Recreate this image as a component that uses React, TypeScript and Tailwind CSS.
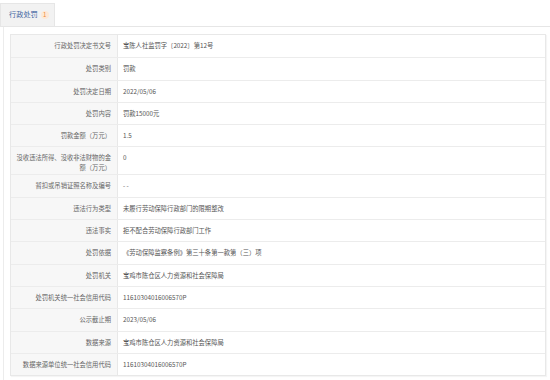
import React from 'react';

const rows: { label: string; value: string; tall?: boolean }[] = [
  { label: '行政处罚决定书文号', value: '宝陈人社监罚字〔2022〕第12号' },
  { label: '处罚类别', value: '罚款' },
  { label: '处罚决定日期', value: '2022/05/06' },
  { label: '处罚内容', value: '罚款15000元' },
  { label: '罚款金额（万元）', value: '1.5' },
  { label: '没收违法所得、没收非法财物的金额（万元）', value: '0', tall: true },
  { label: '暂扣或吊销证照名称及编号', value: '- -' },
  { label: '违法行为类型', value: '未履行劳动保障行政部门的限期整改' },
  { label: '违法事实', value: '拒不配合劳动保障行政部门工作' },
  { label: '处罚依据', value: '《劳动保障监察条例》第三十条第一款第（三）项' },
  { label: '处罚机关', value: '宝鸡市陈仓区人力资源和社会保障局' },
  { label: '处罚机关统一社会信用代码', value: '11610304016006570P' },
  { label: '公示截止期', value: '2023/05/06' },
  { label: '数据来源', value: '宝鸡市陈仓区人力资源和社会保障局' },
  { label: '数据来源单位统一社会信用代码', value: '11610304016006570P' },
];

export default function App() {
  return (
    <div
      className="w-[550px] h-[380px] bg-white overflow-hidden flex flex-col pt-[3px]"
      style={{ fontFamily: '"Noto Sans CJK SC", "Noto Sans", sans-serif' }}
    >
      {/* Tab header */}
      <div className="flex border-b border-[#e6e6e6]">
        <div className="h-[23px] w-[55px] bg-[#f2f2f2] border border-b-0 border-[#e6e6e6] flex items-center pl-[8px] gap-[3px]">
          <span className="text-[7.2px] leading-none text-[#3d64a0]">行政处罚</span>
          <span className="text-[6px] leading-none text-[#f08a3c] bg-[#fde9d6] rounded-full w-[8px] h-[8px] flex items-center justify-center">1</span>
        </div>
      </div>

      {/* Content box */}
      <div className="flex-1 ml-[3px] border-l border-[#ececec] pl-[6px] pr-[4px] pt-[7px]">
        <div className="border border-[#e8e8e8] shadow-[1px_1px_1px_rgba(0,0,0,0.04)]">
          {rows.map((r, i) => (
            <div
              key={i}
              className={`flex ${i > 0 ? 'border-t border-[#ececec]' : ''} ${r.tall ? 'h-[28px]' : 'h-[22.3px]'}`}
            >
              <div className="w-[107px] shrink-0 bg-[#f7f7f7] border-r border-[#e8e8e8] pt-[6px] pr-[6px] pl-[2px] text-right text-[6.3px] leading-[10px] text-[#666]">
                {r.label}
              </div>
              <div className="flex-1 pt-[6px] pl-[5px] text-[6.3px] leading-[10px] text-[#555]">
                {r.value}
              </div>
            </div>
          ))}
        </div>
      </div>
    </div>
  );
}
